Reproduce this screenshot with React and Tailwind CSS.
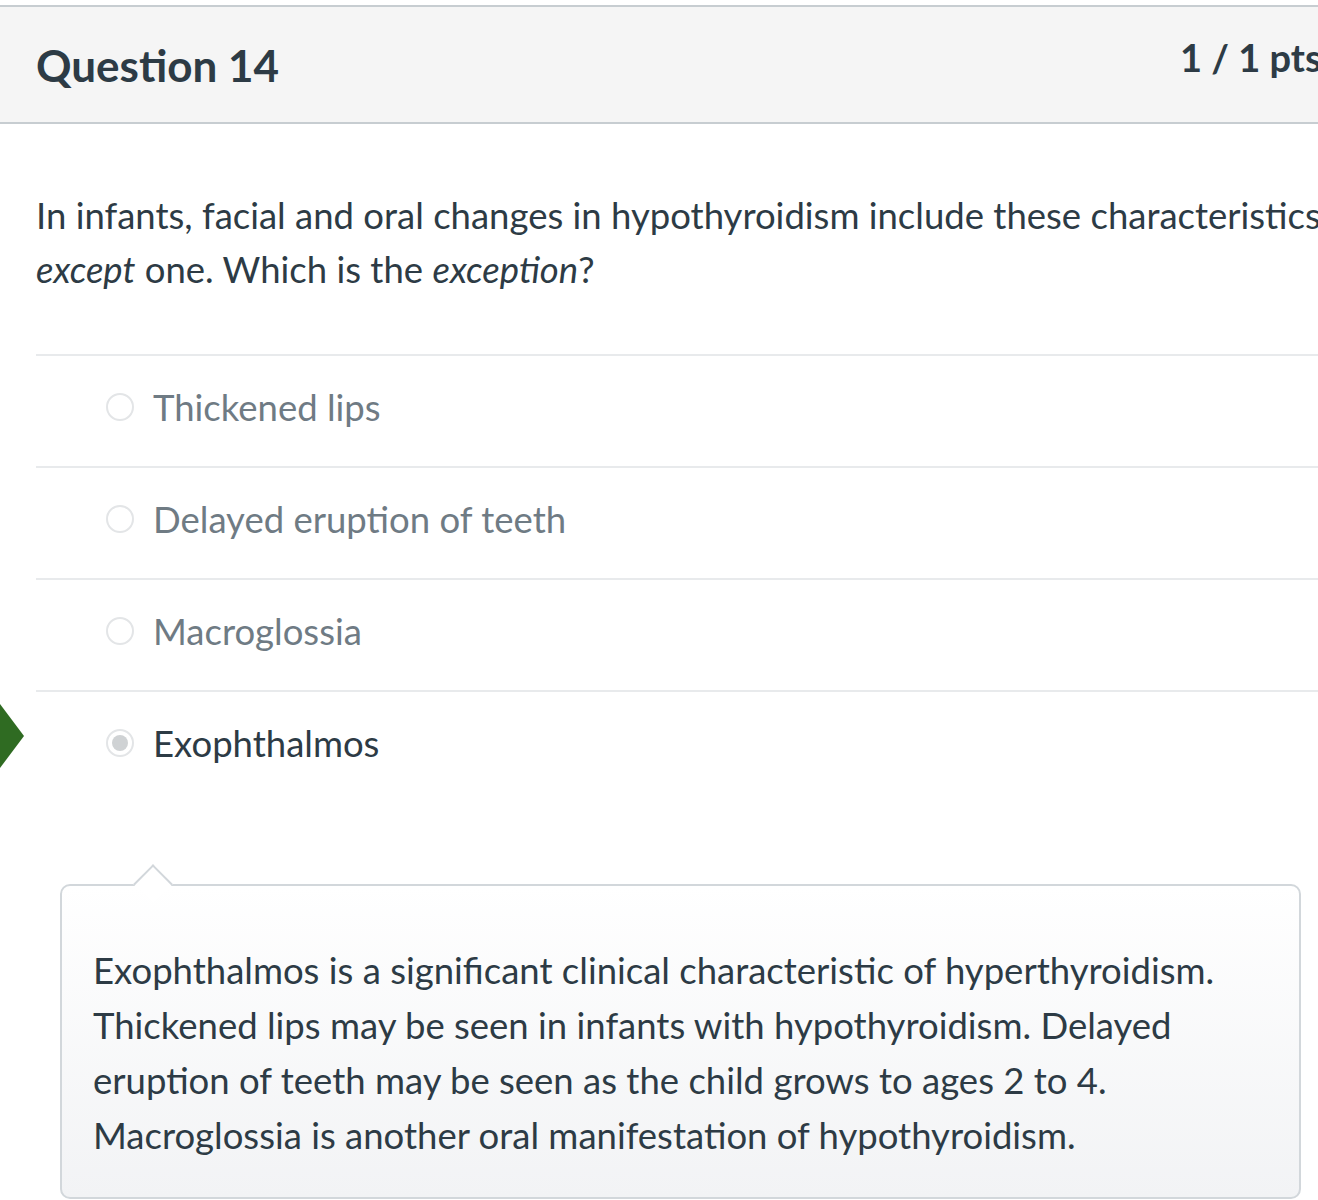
import React from "react";

function Radio({ checked }) {
  return (
    <span className="w-[28px] h-[28px] shrink-0 rounded-full border-2 border-[#e3e5e7] bg-white flex items-center justify-center">
      {checked && <span className="w-[16px] h-[16px] rounded-full bg-[#cfd2d4]" />}
    </span>
  );
}

export default function App() {
  const answers = [
    { t: "Thickened lips", c: false },
    { t: "Delayed eruption of teeth", c: false },
    { t: "Macroglossia", c: false },
    { t: "Exophthalmos", c: true },
  ];
  return (
    <div className="relative w-[1318px] h-[1200px] overflow-hidden bg-white font-['Lato','Noto_Sans',sans-serif] text-[#2d3b45] whitespace-nowrap">
      <div className="mt-[5px] h-[119px] border-t-2 border-b-2 border-[#c7cdd1] bg-[#f5f5f5] flex items-start">
        <h2 className="pl-[36px] pt-[28px] text-[44px] leading-[60px] font-bold flex-1">Question 14</h2>
        <div className="w-[138px] shrink-0 pt-[25px] text-[38px] leading-[50px] font-bold text-[#2d3b45]">1 / 1 pts</div>
      </div>

      <div className="pl-[36px] pt-[64px] text-[36.5px] leading-[54px]">
        In infants, facial and oral changes in hypothyroidism include these characteristics in
        <br />
        <em>except</em> one. Which is the <em>exception</em>?
      </div>

      <div className="ml-[36px] mt-[58px]">
        {answers.map((a, i) => (
          <div
            key={i}
            className="h-[112px] border-t-2 border-[#e8eaec] flex items-center pl-[70px] pb-[8px] gap-[19px]"
          >
            <Radio checked={a.c} />
            <span className={`text-[36.5px] ${a.c ? "text-[#2d3b45]" : "text-[#6f7b84]"}`}>{a.t}</span>
          </div>
        ))}
      </div>

      <svg className="absolute left-0 top-[704px]" width="26" height="64" viewBox="0 0 26 64">
        <polygon points="0,0 24,32 0,64" fill="#2f6b22" />
      </svg>

      <div className="relative ml-[60px] mt-[82px] w-[1241px] h-[315px] rounded-[10px] border-2 border-[#d2d7db] bg-linear-to-b from-white to-[#f2f3f5]">
        <span className="absolute left-[77px] top-[-16px] w-[28px] h-[28px] rotate-45 bg-white border-t-2 border-l-2 border-[#d2d7db]" />
        <div className="relative pl-[31px] pt-[57px] text-[36.5px] leading-[55px]">
          Exophthalmos is a significant clinical characteristic of hyperthyroidism.
          <br />
          Thickened lips may be seen in infants with hypothyroidism. Delayed
          <br />
          eruption of teeth may be seen as the child grows to ages 2 to 4.
          <br />
          Macroglossia is another oral manifestation of hypothyroidism.
        </div>
      </div>
    </div>
  );
}
